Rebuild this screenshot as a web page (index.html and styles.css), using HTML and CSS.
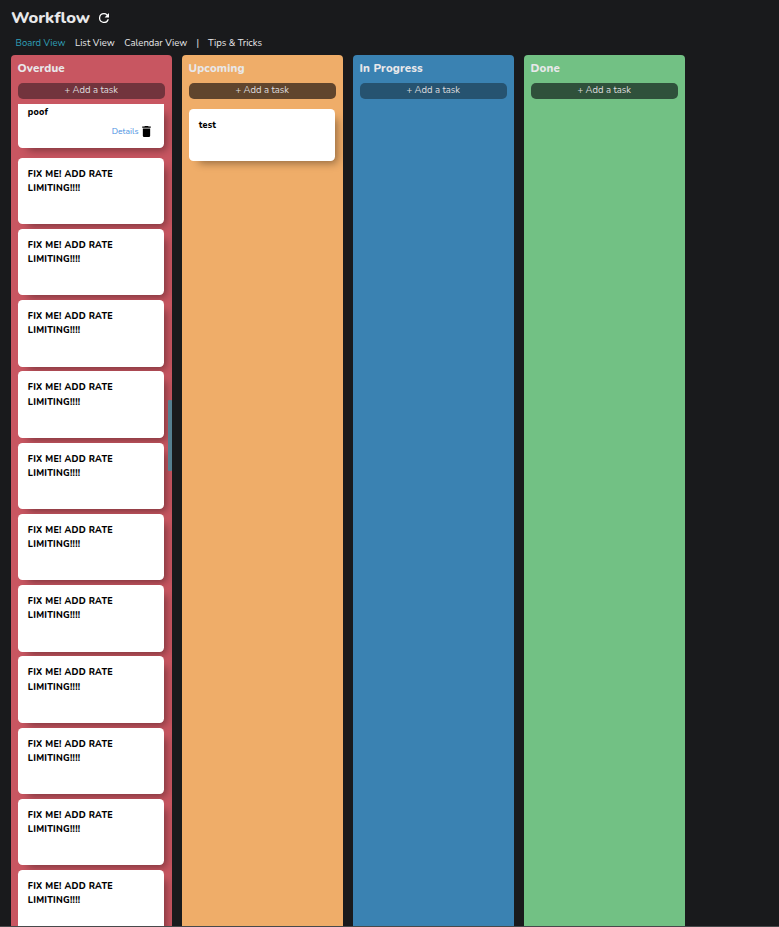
FILE: index.html
```html
<!DOCTYPE html>
<html lang="en">
<head>
<meta charset="utf-8">
<title>Workflow</title>
<link rel="stylesheet" href="styles.css">
</head>
<body>
<div class="app">
  <header class="header">
    <h1>Workflow</h1>
    <svg class="refresh" viewBox="4 4 16 16"><path d="M17.65 6.35A7.96 7.96 0 0 0 12 4a8 8 0 1 0 7.73 10h-2.08A6 6 0 1 1 12 6c1.66 0 3.14.69 4.22 1.78L13 11h7V4z"/></svg>
  </header>
  <nav class="nav">
    <a class="active board-link">Board View</a><a class="list-link">List View</a><a class="calendar-link">Calendar View</a><span class="divider">|</span><a>Tips &amp; Tricks</a>
  </nav>
  <main class="board">
    <section class="column overdue">
      <h2>Overdue</h2>
      <button>+ Add a task</button>
      <div class="cards scrolled">
        <article class="card poof"><h3>poof</h3>
          <div class="actions"><a>Details</a><svg viewBox="5 3 14 18"><path d="M6 19c0 1.1.9 2 2 2h8c1.1 0 2-.9 2-2V7H6zM19 4h-3.500l-1-1h-5l-1 1H5v2h14z"/></svg></div>
        </article>
        <article class="card"><h3>FIX ME! ADD RATE<br>LIMITING!!!!</h3></article>
        <article class="card"><h3>FIX ME! ADD RATE<br>LIMITING!!!!</h3></article>
        <article class="card"><h3>FIX ME! ADD RATE<br>LIMITING!!!!</h3></article>
        <article class="card"><h3>FIX ME! ADD RATE<br>LIMITING!!!!</h3></article>
        <article class="card"><h3>FIX ME! ADD RATE<br>LIMITING!!!!</h3></article>
        <article class="card"><h3>FIX ME! ADD RATE<br>LIMITING!!!!</h3></article>
        <article class="card"><h3>FIX ME! ADD RATE<br>LIMITING!!!!</h3></article>
        <article class="card"><h3>FIX ME! ADD RATE<br>LIMITING!!!!</h3></article>
        <article class="card"><h3>FIX ME! ADD RATE<br>LIMITING!!!!</h3></article>
        <article class="card"><h3>FIX ME! ADD RATE<br>LIMITING!!!!</h3></article>
        <article class="card"><h3>FIX ME! ADD RATE<br>LIMITING!!!!</h3></article>
      </div>
      <div class="scroll-thumb"></div>
    </section>
    <section class="column upcoming">
      <h2>Upcoming</h2>
      <button>+ Add a task</button>
      <div class="cards"><article class="card short"><h3>test</h3></article></div>
    </section>
    <section class="column progress">
      <h2>In Progress</h2>
      <button>+ Add a task</button>
    </section>
    <section class="column done">
      <h2>Done</h2>
      <button>+ Add a task</button>
    </section>
  </main>
</div>
</body>
</html>
```
FILE: styles.css
```css
* { box-sizing: border-box; }
body {
  margin: 0;
  background: #191a1c;
  color: #e8e8ea;
  font-family: Nunito, Lato, sans-serif;
}
h1, h2, h3 { margin: 0; }
.app {
  height: 927px;
  overflow: hidden;
  display: flex;
  flex-direction: column;
  border-bottom: 1px solid #48494b;
}
.header {
  height: 35px;
  padding-left: 11px;
  display: flex;
  align-items: center;
}
h1 { width: 88px; font-size: 16.600px; line-height: 24px; font-weight: 800; }
.refresh { width: 10px; height: 10px; fill: #fff; }
.nav {
  height: 20.400px;
  padding-left: 15.500px;
  display: flex;
  font-size: 9.500px;
  line-height: 16px;
  white-space: nowrap;
}
.board-link { width: 59.500px; }
.list-link { width: 49.300px; }
.calendar-link { width: 72.200px; }
.divider { width: 11.500px; }
.active { color: #2f9fb8; }
.board { flex: 1; min-height: 0; display: flex; gap: 9.500px; padding-left: 10.500px; }
.column {
  position: relative;
  width: 161.500px;
  flex: none;
  padding: 4.600px 7px 0;
  border-radius: 4px 4px 0 0;
  display: flex;
  flex-direction: column;
  overflow: hidden;
}
.overdue { background: #c85661; }
.upcoming { background: #efad69; }
.progress { background: #3a82b2; }
.done { background: #72c184; }
h2 { font-size: 11.500px; line-height: 16px; font-weight: 800; letter-spacing: .15px; }
button {
  flex: none;
  width: 147.500px;
  height: 16.600px;
  margin-top: 6.600px;
  padding: 0 0 2.200px;
  border: 0;
  border-radius: 5px;
  color: #dedcde;
  font: 9.500px/14px Nunito, Lato, sans-serif;
}
.overdue button { background: #72343d; }
.upcoming button { background: #60452d; }
.progress button { background: #265370; }
.done button { background: #2f513b; }
.cards {
  padding: 9.900px 7px 0 .2px;
  margin-right: -7px;
  display: flex;
  flex-direction: column;
  gap: 4.750px;
}
.scrolled {
  flex: 1;
  min-height: 0;
  overflow: hidden;
  margin: 5px -7px 0;
  padding: 0 0 0 7.300px;
}
.card {
  flex: none;
  width: 146px;
  height: 66.500px;
  padding: 9px 10px;
  border-radius: 4.500px;
  background: #fff;
  color: #000;
  box-shadow: 6px 6px 8px -4px rgba(0, 0, 0, .4);
}
.short { height: 52px; }
.poof {
  height: 44px;
  padding-top: 1px;
  margin-bottom: 4.750px;
  border-radius: 0 0 4.500px 4.500px;
}
h3 { font-size: 9px; line-height: 14.250px; font-weight: 800; letter-spacing: .25px; }
.actions {
  display: flex;
  align-items: center;
  justify-content: flex-end;
  gap: 3px;
  padding: 5.400px 3.300px 0 0;
  font-size: 8.500px;
  line-height: 13px;
  color: #4a90e2;
}
.actions svg { width: 9px; height: 11px; }
.scroll-thumb {
  position: absolute;
  right: 0;
  top: 344.500px;
  width: 4.500px;
  height: 71px;
  background: #557f90;
  border-radius: 1px;
}
```
